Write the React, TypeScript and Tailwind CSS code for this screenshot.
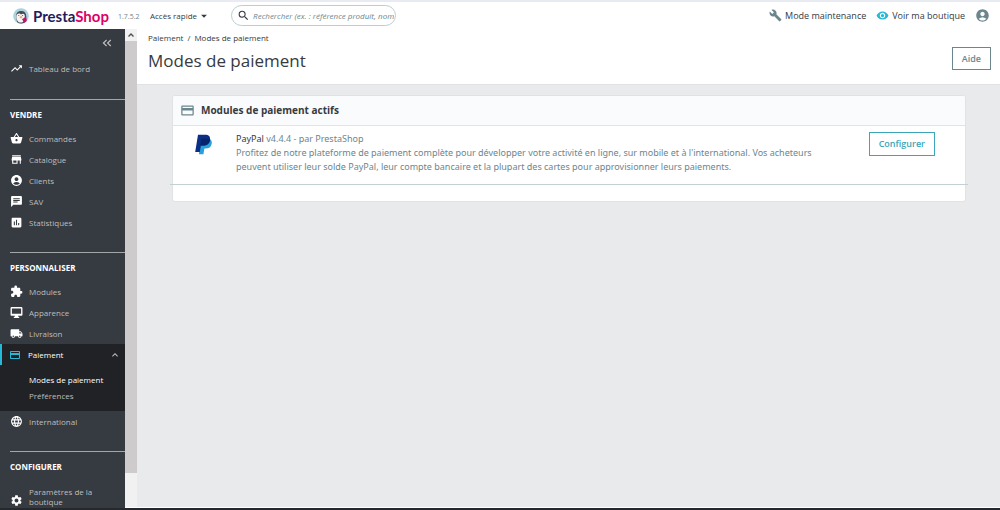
import React from 'react';
import {
  MdTrendingUp,
  MdShoppingBasket,
  MdStore,
  MdAccountCircle,
  MdChat,
  MdAssessment,
  MdExtension,
  MdLocalShipping,
  MdPayment,
  MdLanguage,
  MdSettings,
  MdBuild,
  MdRemoveRedEye,
  MdSearch,
  MdKeyboardArrowUp,
  MdArrowDropDown,
} from 'react-icons/md';

interface NavItem {
  label: string;
  icon: React.ComponentType<{ className?: string }>;
}

function MonitorIcon({ className }: { className?: string }) {
  return (
    <svg viewBox="0 0 24 24" className={className} fill="currentColor">
      <path
        fillRule="evenodd"
        d="M21 2H3a2 2 0 0 0-2 2v12c0 1.100.900 2 2 2h6v2H7v2h10v-2h-2v-2h6a2 2 0 0 0 2-2V4a2 2 0 0 0-2-2Zm-.5 12.500h-17v-10h17v10Z"
      />
    </svg>
  );
}

const sellItems: NavItem[] = [
  { label: 'Commandes', icon: MdShoppingBasket },
  { label: 'Catalogue', icon: MdStore },
  { label: 'Clients', icon: MdAccountCircle },
  { label: 'SAV', icon: MdChat },
  { label: 'Statistiques', icon: MdAssessment },
];

const improveItems: NavItem[] = [
  { label: 'Modules', icon: MdExtension },
  { label: 'Apparence', icon: MonitorIcon },
  { label: 'Livraison', icon: MdLocalShipping },
];

function NavLink({ label, icon: Icon }: NavItem) {
  return (
    <li>
      <a href="#" className="flex h-[21px] items-center gap-[6px] pl-[10px] text-[#bebebe]">
        <Icon className="size-[13px] shrink-0 text-white" />
        {label}
      </a>
    </li>
  );
}

function NavHeading({ children }: { children: React.ReactNode }) {
  return (
    <h2 className="ml-[10px] border-t border-[#a4a7aa] pt-[9px] pb-[7px] text-[8px] leading-[12px] font-bold text-white uppercase">
      {children}
    </h2>
  );
}

function Sidebar() {
  return (
    <nav className="w-[125px] shrink-0 overflow-hidden bg-[#363a41] text-[8px] leading-[10px]">
      <div className="flex justify-end pt-[10px] pr-[13px] pb-[11px]">
        <button type="button" aria-label="Réduire le menu" className="text-[#bebebe]">
          <svg viewBox="0 0 10 8" className="h-2 w-[10px]" fill="none" stroke="currentColor" strokeWidth="1.2">
            <path d="M4.6 1 1.4 4l3.2 3M8.8 1 5.6 4l3.2 3" />
          </svg>
        </button>
      </div>
      <ul className="pb-5">
        <NavLink label="Tableau de bord" icon={MdTrendingUp} />
      </ul>

      <NavHeading>Vendre</NavHeading>
      <ul className="pb-[19px]">
        {sellItems.map((item) => (
          <NavLink key={item.label} {...item} />
        ))}
      </ul>

      <NavHeading>Personnaliser</NavHeading>
      <ul className="pb-[19px]">
        {improveItems.map((item) => (
          <NavLink key={item.label} {...item} />
        ))}
        <li className="bg-[#202226]">
          <a href="#" className="flex h-[21px] items-center gap-[7px] border-l-2 border-[#25b9d7] pr-1 pl-[7px] text-white">
            <MdPayment className="size-3 shrink-0 text-[#25b9d7]" />
            <span className="flex-1">Paiement</span>
            <MdKeyboardArrowUp className="size-3 text-[#bebebe]" />
          </a>
          <ul className="pt-[7px] pb-[7px] pl-[29px] leading-[16px]">
            <li>
              <a href="#" className="text-white">Modes de paiement</a>
            </li>
            <li>
              <a href="#" className="text-[#bebebe]">Préférences</a>
            </li>
          </ul>
        </li>
        <NavLink label="International" icon={MdLanguage} />
      </ul>

      <NavHeading>Configurer</NavHeading>
      <a href="#" className="flex items-end gap-[6px] pt-[7px] pl-[10px] text-[#bebebe]">
        <MdSettings className="size-[13px] shrink-0 text-white" />
        <span className="w-[70px]">Paramètres de la boutique</span>
      </a>
    </nav>
  );
}

function Scrollbar() {
  return (
    <div className="flex w-3 shrink-0 flex-col bg-[#f1f1f1]" aria-hidden="true">
      <div className="flex h-3 items-center justify-center">
        <svg viewBox="0 0 8 6" className="h-[6px] w-2" fill="none" stroke="#505050" strokeWidth="1.4">
          <path d="M1.5 4.5 4 2l2.5 2.5" />
        </svg>
      </div>
      <div className="mb-[34px] flex-1 bg-[#cdcbcc]" />
    </div>
  );
}

function Mascot() {
  return (
    <svg viewBox="0 0 16 16" className="size-4">
      <circle cx="8" cy="8" r="7.8" fill="#a9d3dd" />
      <path d="M3 8.5C3 4.5 5.2 3 8.2 3s5 1.8 5 5.2v5.4A7.6 7.6 0 0 1 4 14Z" fill="#4a4a55" />
      <path d="M3.3 8.4c0-1.8 1.2-2.8 2.7-2.8 1 0 1.6.5 2 1 .5-.6 1.2-.8 2-.8 1.3 0 1.8 1.2 1.8 2.4 0 3.8-1.4 6.4-4 6.4S3.3 12 3.3 8.4Z" fill="#f5f5f5" />
      <circle cx="5.8" cy="7.5" r=".6" fill="#55585e" />
      <circle cx="9.6" cy="7.5" r=".6" fill="#55585e" />
      <path d="m6.3 9 1.8-.9L9.6 9 8 10.6Z" fill="#d9a566" />
      <path d="M9 11.2 13 8.8l.8 3.7-2.5 2.3Z" fill="#c4126a" />
    </svg>
  );
}

function PayPalLogo() {
  return (
    <svg viewBox="0 0 18 21" className="h-[21px] w-[18px]">
      <path d="M6.3 5h9.3c1.9 1 2.5 2.5 2.1 4.8-.7 3.4-2.8 4.8-6 4.8h-1.3l-1 5.6H5Z" fill="#28a0dc" />
      <path d="M4 .8h7.2c3.5 0 5.4 1.8 4.8 5.2-.7 3.9-3.1 5.500-6.800 5.500H6.900l-1.100 6.600H1.200Z" fill="#0b2f84" />
      <path d="M7.4 4.8h8.5c.3.5.3.8.2 1.4-.7 3.600-3.200 5.300-6.900 5.300H6.300Z" fill="#08246b" />
    </svg>
  );
}

export default function App() {
  return (
    <div className="flex h-screen flex-col overflow-hidden border-b-2 border-[#25282d] bg-[#e9eaec] font-['Open_Sans','Noto_Sans',sans-serif] text-[#363a41]">
      <header className="flex h-[29px] shrink-0 items-center border-t-2 border-[#e9ebf2] bg-white pr-[10px] pl-[13px] text-[9px]">
        <a href="#" className="mr-[9px] flex items-center gap-1" aria-label="PrestaShop">
          <Mascot />
          <span className="font-[Lato,sans-serif] text-[15px] leading-[20px] font-bold text-[#251b5b]">
            Presta<span className="text-[#df0067]">Shop</span>
          </span>
        </a>
        <span className="w-8 pt-1 text-[7px] text-[#6c868e]">1.7.5.2</span>
        <button type="button" className="flex items-center text-[8px]">
          Accès rapide
          <MdArrowDropDown className="size-[14px]" />
        </button>
        <label className="ml-5 flex h-[21px] w-[165px] items-center gap-[3px] rounded-full border border-[#bbcdd2] pr-px pl-[5px]">
          <MdSearch className="size-[13px] shrink-0" />
          <input
            type="text"
            aria-label="Rechercher"
            placeholder="Rechercher (ex. : référence produit, nom"
            className="w-full min-w-0 text-[8px] italic outline-none placeholder:text-[#6c868e]"
          />
        </label>
        <div className="ml-auto flex items-center gap-[10px]">
          <a href="#" className="flex items-center gap-[3px]">
            <MdBuild className="size-[13px] text-[#6c868e]" />
            Mode maintenance
          </a>
          <a href="#" className="flex items-center gap-[3px]">
            <MdRemoveRedEye className="size-[13px] text-[#25b9d7]" />
            Voir ma boutique
          </a>
          <button type="button" aria-label="Mon compte">
            <MdAccountCircle className="size-[15px] text-[#6c868e]" />
          </button>
        </div>
      </header>

      <div className="flex min-h-0 flex-1">
        <Sidebar />
        <div className="flex min-w-0 flex-1 border-b border-white">
          <Scrollbar />
          <main className="min-w-0 flex-1">
            <div className="flex items-start justify-between border-b border-[#dfe1e4] bg-white pr-[9px] pb-3 pl-[11px]">
              <div>
                <div className="flex gap-1 pt-[3px] text-[8px] leading-[12px]">
                  <a href="#">Paiement</a>
                  <span>/</span>
                  <a href="#">Modes de paiement</a>
                </div>
                <h1 className="pt-[5px] text-[17px] leading-[23px]">Modes de paiement</h1>
              </div>
              <button type="button" className="mt-[18px] h-[23px] border border-[#6c868e] px-[9px] text-[9px] font-semibold text-[#6c868e]">
                Aide
              </button>
            </div>

            <section className="mt-[10px] mr-[34px] ml-[35px] rounded-[3px] border border-[#dfe3e6] bg-white pb-4">
              <h2 className="flex h-[30px] items-center gap-[6px] rounded-t-[2px] border-b border-[#dbe6e9] bg-[#fafbfc] pl-[7px] text-[10px] font-bold">
                <MdPayment className="size-[15px] text-[#6c868e]" />
                Modules de paiement actifs
              </h2>
              <div className="-mx-[3px] flex items-start border-b border-[#c3d1d5] pt-[6px] pr-[33px] pb-[10px] pl-[24px]">
                <div className="w-[42px] shrink-0 pt-[2px]">
                  <PayPalLogo />
                </div>
                <div className="flex-1 font-['Noto_Sans','Open_Sans',sans-serif] text-[9px] leading-[14px] text-[#6c868e]">
                  <p>
                    <span className="text-[#363a41]">PayPal</span> v4.4.4 - par PrestaShop
                  </p>
                  <p className="max-w-[600px]">
                    Profitez de notre plateforme de paiement complète pour développer votre activité en ligne, sur mobile
                    et à l'international. Vos acheteurs peuvent utiliser leur solde PayPal, leur compte bancaire et la
                    plupart des cartes pour approvisionner leurs paiements.
                  </p>
                </div>
                <button type="button" className="h-6 border border-[#3ba6b8] px-[9px] text-[9px] font-semibold text-[#3ba6b8]">
                  Configurer
                </button>
              </div>
            </section>
          </main>
        </div>
      </div>
    </div>
  );
}
